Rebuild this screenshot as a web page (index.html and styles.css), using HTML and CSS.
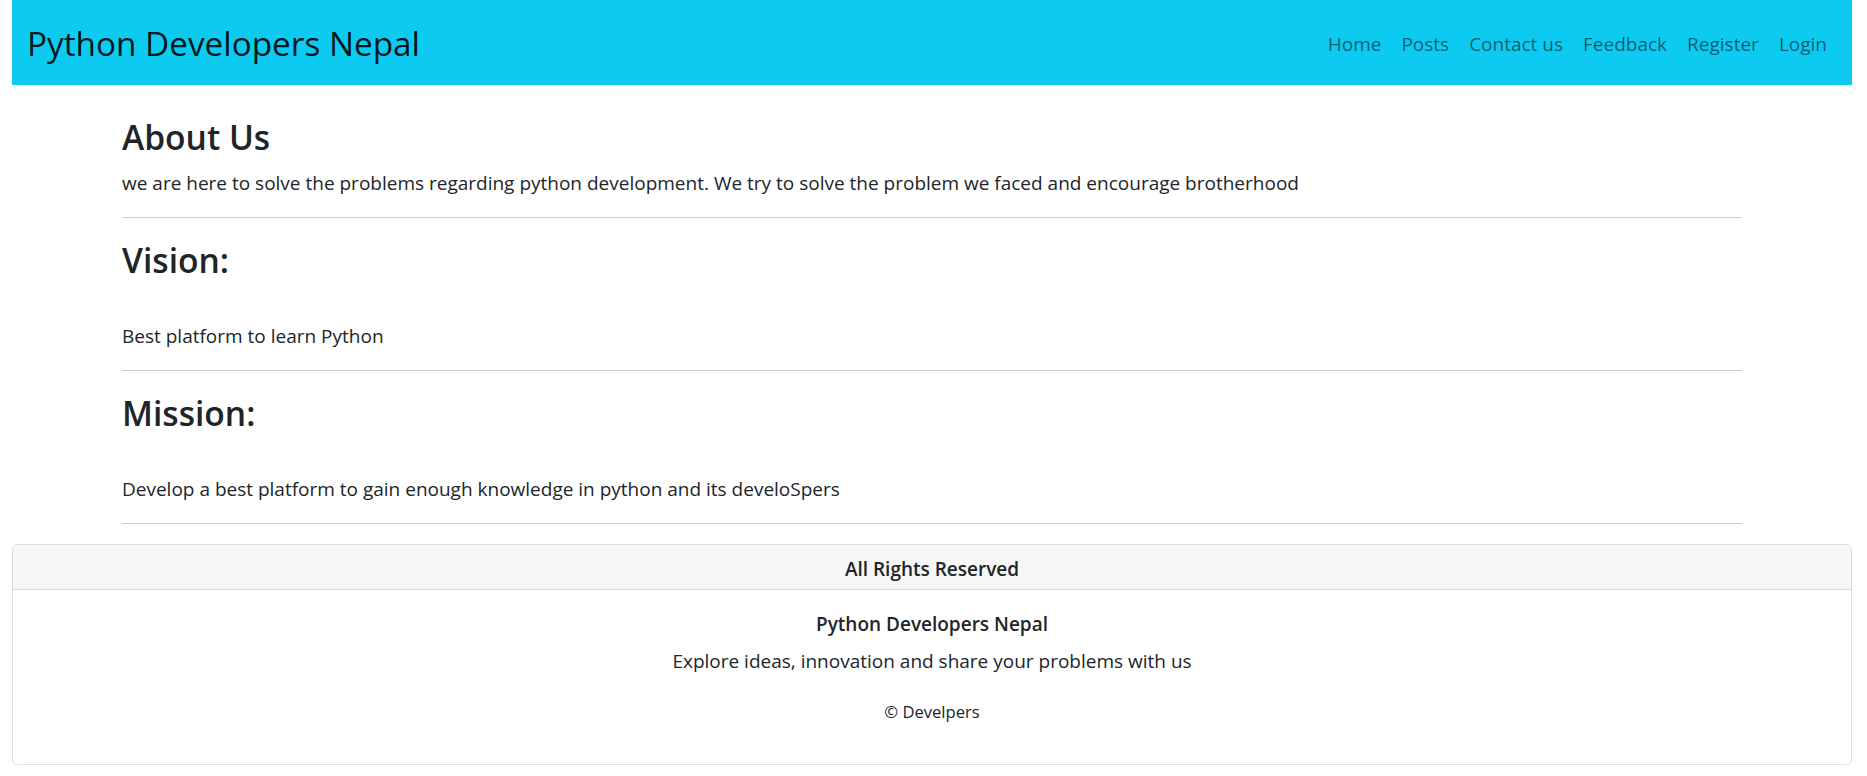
FILE: index.html
```html
<!DOCTYPE html>
<html lang="en">
<head>
<meta charset="utf-8">
<title>About Us - Python Developers Nepal</title>
<link rel="stylesheet" href="styles.css">
</head>
<body>
<nav class="navbar">
  <a class="brand" href="#">Python Developers Nepal</a>
  <ul class="nav-links">
    <li><a href="#">Home</a></li>
    <li><a href="#">Posts</a></li>
    <li><a href="#">Contact us</a></li>
    <li><a href="#">Feedback</a></li>
    <li><a href="#">Register</a></li>
    <li><a href="#">Login</a></li>
  </ul>
</nav>

<main class="container">
  <h3 class="section-title">About Us</h3>
  <p class="text">we are here to solve the problems regarding python development. We try to solve the problem we faced and encourage brotherhood</p>
  <hr class="divider">
  <h3 class="section-title spaced">Vision:</h3>
  <p class="text">Best platform to learn Python</p>
  <hr class="divider">
  <h3 class="section-title spaced">Mission:</h3>
  <p class="text">Develop a best platform to gain enough knowledge in python and its develoSpers</p>
  <hr class="divider">
</main>

<footer class="card">
  <div class="card-header">All Rights Reserved</div>
  <div class="card-body">
    <h6 class="card-title">Python Developers Nepal</h6>
    <p class="text">Explore ideas, innovation and share your problems with us</p>
    <p class="text"><small class="copy">© Develpers</small></p>
  </div>
</footer>
</body>
</html>
```

FILE: styles.css
```css
* { box-sizing: border-box; }

html, body { height: 100%; }

body {
  margin: 0 15px 0 12px;
  font-family: "Open Sans", "Noto Sans", sans-serif;
  font-size: 19px;
  line-height: 30px;
  color: #212529;
  background: #fff;
}

a { text-decoration: none; }

.navbar {
  height: 85px;
  background: #0dcaf0;
  display: flex;
  align-items: center;
  justify-content: space-between;
  padding: 0 15px;
}

.brand {
  font-size: 33.3px;
  line-height: 50px;
  color: rgba(0, 0, 0, 0.9);
}

.nav-links {
  list-style: none;
  margin: 0;
  padding: 0;
  display: flex;
  align-items: center;
}

.nav-links a {
  display: block;
  padding: 2px 10px 0;
  font-size: 19px;
  line-height: 30px;
  color: rgba(0, 0, 0, 0.55);
}

.container {
  width: 1620px;
  margin: 30px auto 0;
}

.section-title {
  margin: 0 0 10px;
  padding-top: 2px;
  height: 42px;
  font-size: 33.6px;
  line-height: 40px;
  font-weight: 600;
  color: #212529;
}

.section-title.spaced { margin-bottom: 40px; }

.text {
  margin: 0 0 20px;
  padding-top: 1px;
  height: 30px;
}

.divider {
  margin: 20px 0;
  border: 0;
  border-top: 1px solid #cacbcc;
  height: 0;
}

.card {
  border: 1px solid rgba(0, 0, 0, 0.125);
  border-radius: 5px;
  text-align: center;
  overflow: hidden;
}

.card-header {
  padding: 12px 20px 8px;
  background: #f7f7f7;
  border-bottom: 1px solid rgba(0, 0, 0, 0.125);
  font-size: 19px;
  line-height: 24px;
  font-weight: 600;
}

.card-body {
  padding: 20px;
}

.card-title {
  margin: 0 0 8px;
  padding-top: 2px;
  font-size: 19px;
  line-height: 24px;
  font-weight: 600;
}

.card-body .text {
  padding-top: 2px;
}

.copy {
  font-size: 16.6px;
}
```
